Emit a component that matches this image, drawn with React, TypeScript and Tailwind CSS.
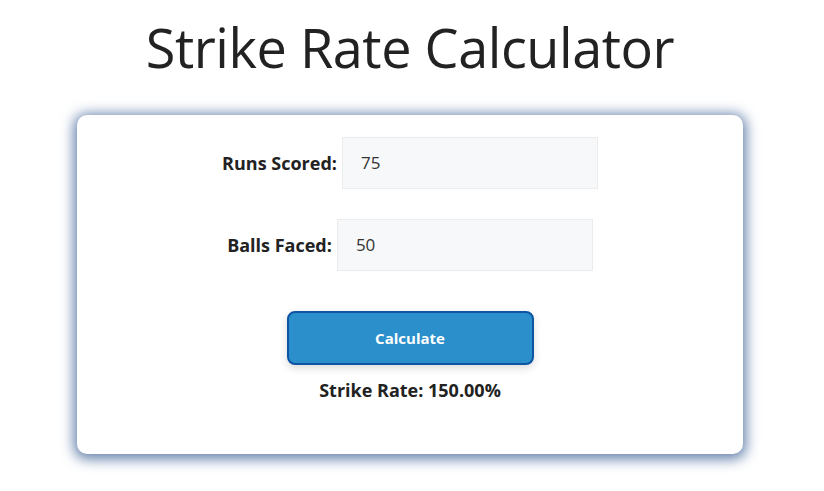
import React from "react";

export default function App() {
  return (
    <div
      className="min-h-[491px] w-[820px] bg-white text-[#222]"
      style={{ fontFamily: '"Open Sans", "Noto Sans", sans-serif' }}
    >
      <h1 className="pt-[9px] text-center text-[54px] font-normal leading-[76px] tracking-[-0.45px] text-[#222]">
        Strike Rate Calculator
      </h1>
      <div className="mx-auto mt-[30px] flex h-[339px] w-[666px] flex-col items-center rounded-[10px] bg-white pt-[22px] shadow-[0_2px_13px_3px_rgba(70,105,155,0.85)]">
        <div className="flex items-center">
          <label className="mr-[5px] text-[18px] font-bold text-[#222]">Runs Scored:</label>
          <div className="flex h-[52px] w-[256px] items-center border border-[#ececec] bg-[#f7f8fa] pl-[18px] text-[17px] text-[#333]">
            75
          </div>
        </div>
        <div className="mt-[30px] flex items-center">
          <label className="mr-[5px] text-[18px] font-bold text-[#222]">Balls Faced:</label>
          <div className="flex h-[52px] w-[256px] items-center border border-[#ececec] bg-[#f7f8fa] pl-[18px] text-[17px] text-[#333]">
            50
          </div>
        </div>
        <button className="mt-[40px] flex h-[54px] w-[247px] items-center justify-center rounded-[8px] border-2 border-[#0d55a3] bg-[#2a8fca] text-[15px] font-bold text-white shadow-[0_3px_8px_rgba(0,0,0,0.15)]">
          Calculate
        </button>
        <div className="mt-[12px] text-[18px] font-bold text-[#222]">Strike Rate: 150.00%</div>
      </div>
    </div>
  );
}
